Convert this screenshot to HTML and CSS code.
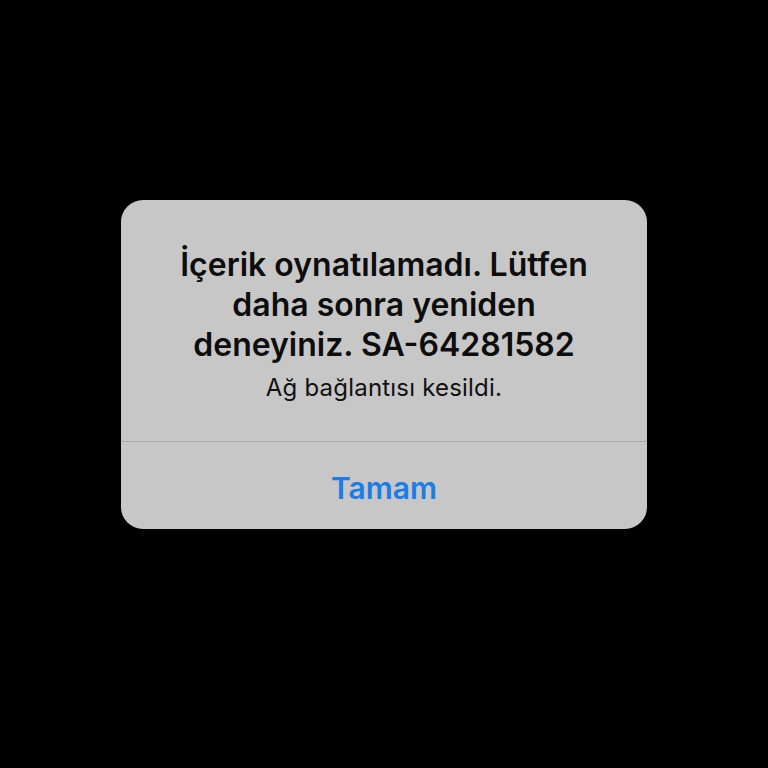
FILE: index.html
```html
<!DOCTYPE html>
<html lang="tr">
<head>
<meta charset="utf-8">
<link rel="stylesheet" href="styles.css">
</head>
<body>
<div class="alert">
  <div class="content">
    <div class="title">İçerik oynatılamadı. Lütfen daha sonra yeniden deneyiniz. SA-64281582</div>
    <div class="message">Ağ bağlantısı kesildi.</div>
  </div>
  <div class="actions">
    <div class="button">Tamam</div>
  </div>
</div>
</body>
</html>
```
FILE: styles.css
```css
html, body {
  margin: 0;
  padding: 0;
  background: #000;
  height: 100%;
}
body {
  display: flex;
  justify-content: center;
  align-items: flex-start;
  padding-top: 200px;
  box-sizing: border-box;
  font-family: Inter, "Noto Sans", sans-serif;
}
.alert {
  width: 526px;
  background: #c7c7c7;
  border-radius: 22px;
  overflow: hidden;
}
.content {
  padding: 45px 30px 39px;
  text-align: center;
  border-bottom: 1px solid #ababab;
}
.title {
  font-size: 32px;
  font-weight: 600;
  line-height: 40px;
  color: #0d0d0d;
}
.message {
  margin-top: 9px;
  font-size: 24px;
  line-height: 28px;
  letter-spacing: 0.2px;
  color: #111;
}
.actions {
  height: 87px;
  display: flex;
  align-items: center;
  justify-content: center;
}
.button {
  font-size: 30px;
  font-weight: 600;
  color: #1a7de8;
  margin-top: 4px;
}
```
